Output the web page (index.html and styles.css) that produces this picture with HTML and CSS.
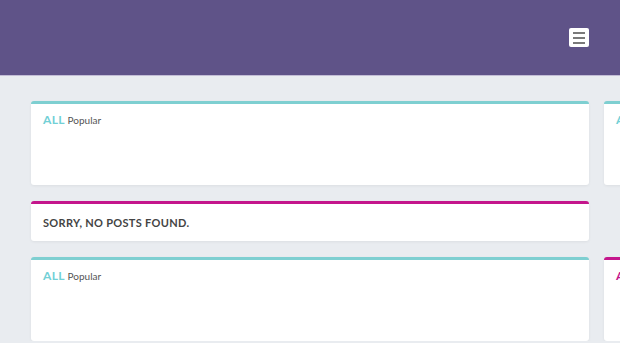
FILE: index.html
```html
<!DOCTYPE html>
<html lang="en">
<head>
    <meta charset="UTF-8">
    <meta name="viewport" content="width=device-width, initial-scale=1.0">
    <title>Posts</title>
    <link rel="stylesheet" href="styles.css">
</head>
<body>
    <header>
        <button class="menu-toggle" aria-label="Menu">
            <span></span>
            <span></span>
            <span></span>
        </button>
    </header>
    <main class="feed">
        <div class="card card-teal card-tall">
            <p class="card-title"><span class="tag">ALL</span> Popular</p>
        </div>
        <div class="card card-teal card-tall">
            <p class="card-title"><span class="tag">ALL</span> Popular</p>
        </div>
        <div class="card card-pink card-notice">
            <p class="notice">SORRY, NO POSTS FOUND.</p>
        </div>
        <div class="spacer"></div>
        <div class="card card-teal card-tall">
            <p class="card-title"><span class="tag">ALL</span> Popular</p>
        </div>
        <div class="card card-pink card-tall">
            <p class="card-title"><span class="tag">ALL</span> Popular</p>
        </div>
    </main>
</body>
</html>
```

FILE: styles.css
```css
body {
    font-family: 'Lato', 'Liberation Sans', sans-serif;
    margin: 0;
    padding: 0;
    background-color: #e9ecf0;
    color: #444;
    overflow: hidden;
}

header {
    background-color: #5f5388;
    height: 76px;
    border-bottom: 1px solid #c3bdd6;
    display: flex;
    align-items: center;
    justify-content: flex-end;
    padding: 0 31px;
    box-sizing: border-box;
}

.menu-toggle {
    width: 20px;
    height: 19px;
    background-color: white;
    border: none;
    border-radius: 2px;
    padding: 0;
    display: flex;
    flex-direction: column;
    justify-content: center;
    align-items: center;
    gap: 3px;
    cursor: pointer;
}

.menu-toggle span {
    display: block;
    width: 12px;
    height: 2px;
    background-color: #7a7a7a;
}

.feed {
    display: grid;
    grid-template-columns: 558px 558px;
    column-gap: 15px;
    row-gap: 16px;
    padding: 25px 0 0 31px;
}

.card {
    background-color: white;
    border-radius: 3px;
    border-top: 3px solid #7ecfd1;
    box-shadow: 0 1px 3px rgba(0, 0, 0, 0.06);
    padding: 0 12px;
}

.card-teal {
    border-top-color: #7ecfd1;
}

.card-pink {
    border-top-color: #c4168c;
}

.card-tall {
    height: 81px;
}

.card-notice {
    height: 37px;
    display: flex;
    align-items: center;
}

.card-title {
    margin: 8px 0 0;
    font-size: 10px;
    color: #555;
}

.tag {
    font-size: 12px;
    font-weight: bold;
    letter-spacing: 0.4px;
    color: #72d0d6;
}

.card-pink .tag {
    color: #c4168c;
}

.notice {
    margin: 0;
    font-size: 11px;
    font-weight: bold;
    letter-spacing: 0.3px;
    color: #444;
}
```
